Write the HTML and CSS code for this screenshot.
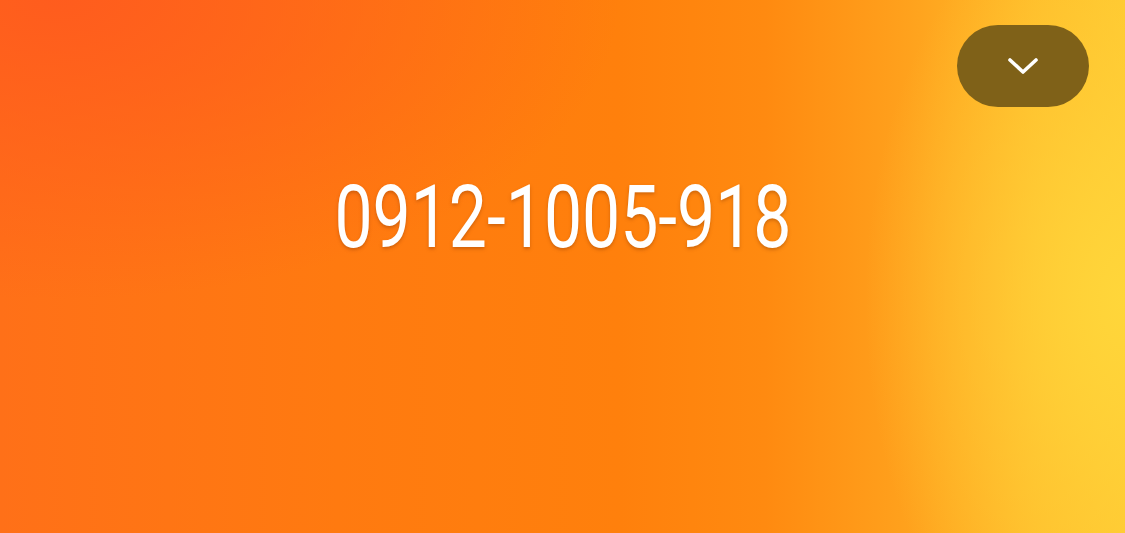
FILE: index.html
```html
<!DOCTYPE html>
<html lang="en">
<head>
<meta charset="utf-8">
<title>Number</title>
<link rel="stylesheet" href="styles.css">
</head>
<body>
<main class="screen">
  <header class="topbar">
    <button class="collapse-btn" type="button" aria-label="Collapse">
      <svg class="chevron" viewBox="0 0 32 20" width="32" height="20" aria-hidden="true">
        <path d="M3 4 L16 16 L29 4" fill="none" stroke="#fff" stroke-width="3.6" stroke-linecap="round" stroke-linejoin="round"/>
      </svg>
    </button>
  </header>
  <section class="display">
    <h1 class="number">0912-1005-918</h1>
  </section>
</main>
</body>
</html>
```
FILE: styles.css
```css
html, body {
  margin: 0;
  padding: 0;
  height: 100%;
}
body {
  overflow: hidden;
  font-family: Roboto, "Liberation Sans", sans-serif;
}
.screen {
  width: 1125px;
  height: 533px;
  box-sizing: border-box;
  display: flex;
  flex-direction: column;
  background:
    radial-gradient(ellipse 260px 420px at 1125px 300px, rgba(255, 214, 58, 1), rgba(255, 210, 58, 0.5) 50%, rgba(255, 200, 50, 0) 100%),
    radial-gradient(ellipse 560px 300px at 60px 0px, rgba(255, 90, 30, 0.9), rgba(255, 90, 30, 0) 100%),
    linear-gradient(90deg, #ff7018 0%, #ff7a10 30%, #ff800c 55%, #ff8a10 68%, #ffa01c 80%, #ffbc2a 92%, #ffc830 100%);
}
.topbar {
  display: flex;
  justify-content: flex-end;
  padding: 25px 36px 0 0;
}
.collapse-btn {
  width: 132px;
  height: 82px;
  border: none;
  border-radius: 41px;
  background: #7f6118;
  display: flex;
  align-items: center;
  justify-content: center;
  padding: 0;
  cursor: pointer;
}
.chevron {
  display: block;
}
.display {
  display: flex;
  justify-content: center;
  padding-top: 60px;
}
.number {
  margin: 0;
  color: #fff;
  font-weight: 400;
  font-size: 87px;
  line-height: 100px;
  letter-spacing: 0;
  transform: scaleX(0.78);
  text-shadow: 0 2px 4px rgba(120, 50, 0, 0.35);
}
```
